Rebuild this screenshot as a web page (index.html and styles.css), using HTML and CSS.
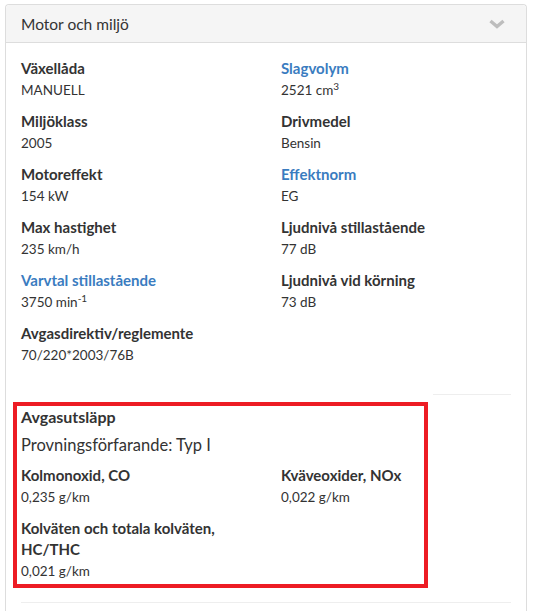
FILE: index.html
```html
<!DOCTYPE html>
<html lang="sv">
<head>
  <meta charset="UTF-8" />
  <title>Motor och miljö</title>
  <meta name="viewport" content="width=device-width, initial-scale=1" />
  <link rel="stylesheet" href="styles.css">
</head>
<body>
  <div class="panel">
    <div class="panel-heading">
      <span class="panel-title">Motor och miljö</span>
      <svg class="chevron" width="16" height="10" viewBox="0 0 16 10"><path d="M1.5 2 L8 7.5 L14.5 2" fill="none" stroke="#bdbdbd" stroke-width="3.4"/></svg>
    </div>
    <div class="panel-body">
      <div class="facts">
        <div class="fact"><div class="label">Växellåda</div><div class="value">MANUELL</div></div>
        <div class="fact"><div class="label link">Slagvolym</div><div class="value">2521 cm<sup>3</sup></div></div>
        <div class="fact"><div class="label">Miljöklass</div><div class="value">2005</div></div>
        <div class="fact"><div class="label">Drivmedel</div><div class="value">Bensin</div></div>
        <div class="fact"><div class="label">Motoreffekt</div><div class="value">154 kW</div></div>
        <div class="fact"><div class="label link">Effektnorm</div><div class="value">EG</div></div>
        <div class="fact"><div class="label">Max hastighet</div><div class="value">235 km/h</div></div>
        <div class="fact"><div class="label">Ljudnivå stillastående</div><div class="value">77 dB</div></div>
        <div class="fact"><div class="label link">Varvtal stillastående</div><div class="value">3750 min<sup>-1</sup></div></div>
        <div class="fact"><div class="label">Ljudnivå vid körning</div><div class="value">73 dB</div></div>
        <div class="fact"><div class="label">Avgasdirektiv/reglemente</div><div class="value">70/220*2003/76B</div></div>
      </div>

      <hr class="divider top">

      <div class="emissions">
        <div class="highlight"></div>
        <h4>Avgasutsläpp</h4>
        <p class="method">Provningsförfarande: Typ I</p>
        <div class="facts">
          <div class="fact"><div class="label">Kolmonoxid, CO</div><div class="value">0,235 g/km</div></div>
          <div class="fact"><div class="label">Kväveoxider, NOx</div><div class="value">0,022 g/km</div></div>
          <div class="fact"><div class="label">Kolväten och totala kolväten, HC/THC</div><div class="value">0,021 g/km</div></div>
        </div>
      </div>

      <hr class="divider">
    </div>
  </div>
</body>
</html>
```

FILE: styles.css
```css
body { margin: 4px 6px 0 5px; font-family: "Lato", sans-serif; color: #333; background: white; }
.panel { border: 1px solid #ddd; border-bottom: none; border-radius: 4px 4px 0 0; min-height: 620px; }
.panel-heading {
  display: flex; justify-content: space-between; align-items: center;
  height: 37px; padding: 0 15px; background: #f5f5f5; border-bottom: 1px solid #ddd;
  border-radius: 4px 4px 0 0;
}
.panel-title { font-family: "Lato", sans-serif; font-size: 15.5px; color: #333; }
.chevron { margin-right: 6px; }
.panel-body { padding: 15px 15px 0; }
.facts { display: grid; grid-template-columns: 1fr 1fr; column-gap: 30px; row-gap: 11px; }
.label { font-size: 15px; font-weight: bold; line-height: 21px; color: #333; }
.label.link { color: #3a7cc0; }
.value { font-size: 13.5px; line-height: 21px; padding-top: 1px; margin-bottom: -1px; color: #333; }
.value sup { font-size: 10px; line-height: 0; }
.divider { border: none; border-top: 1px solid #eee; margin: 29px 0 0; }
.divider.top { margin-left: 412px; }
.emissions { position: relative; margin-top: 11px; padding-bottom: 7px; }
.emissions h4 { margin: 0; font-size: 16px; line-height: 21px; font-weight: bold; }
.emissions .method { margin: 7px 0 9px; font-size: 16.5px; line-height: 22px; }
.highlight {
  position: absolute; left: -8px; top: -4px; width: 407px; bottom: 0;
  border: 4px solid #ed1c24;
}
.emissions + .divider { margin-top: 14px; }
```
